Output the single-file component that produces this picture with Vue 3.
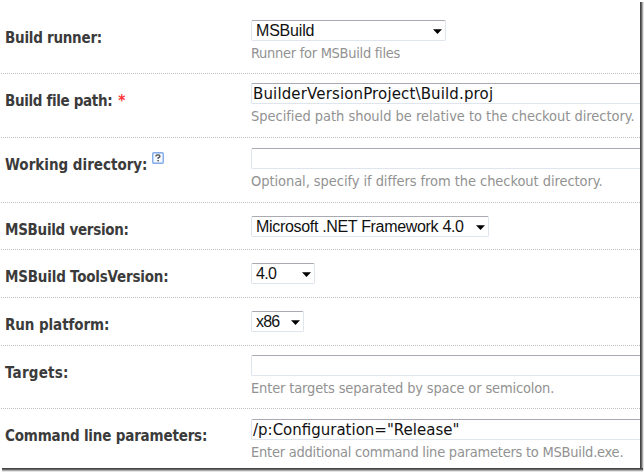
<template>
    <div class="panel">
        <div class="form">
            <div v-for="row in rows" :key="row.label" class="row" :class="row.size">
                <label class="name">
                    <span :style="{ letterSpacing: row.labelGap + 'px' }">{{ row.label }}</span>
                    <span v-if="row.required" class="required">*</span>
                    <svg v-if="row.help" class="help" width="12" height="12" viewBox="0 0 12 12">
                        <rect x="0.75" y="0.75" width="10.5" height="10.5" rx="1" fill="#f4f8ff" stroke="#83abea" stroke-width="1.4" />
                        <path d="M4 4.4V3.6Q4.3 2.8 6 2.8Q8 2.8 8 4.2Q8 5.1 6.1 5.9V7" fill="none" stroke="#444" stroke-width="1.2" />
                        <rect x="5.4" y="8" width="1.4" height="1.4" fill="#444" />
                    </svg>
                </label>
                <div class="field">
                    <div v-if="row.type === 'select'" class="select" :style="{ width: row.width + 'px' }">
                        <span :style="{ letterSpacing: row.valueGap + 'px' }">{{ row.value }}</span>
                        <svg class="arrow" width="9" height="5" viewBox="0 0 9 5">
                            <path d="M0 0.2H9L4.5 5Z" fill="#000" />
                        </svg>
                    </div>
                    <div v-else class="input">
                        <span :style="{ letterSpacing: row.valueGap + 'px' }">{{ row.value }}</span>
                    </div>
                    <p v-if="row.hint" class="hint">
                        <span :style="{ letterSpacing: row.hintGap + 'px' }">{{ row.hint }}</span>
                    </p>
                </div>
            </div>
        </div>
    </div>
</template>

<script setup>
const rows = [
    { label: 'Build runner:', labelGap: -0.25, type: 'select', value: 'MSBuild', valueGap: -0.2, width: 195, hint: 'Runner for MSBuild files', hintGap: -0.29, size: 'first' },
    { label: 'Build file path:', labelGap: -0.34, required: true, type: 'input', value: 'BuilderVersionProject\\Build.proj', valueGap: 0.14, hint: 'Specified path should be relative to the checkout directory.', hintGap: -0.03, size: 'normal' },
    { label: 'Working directory:', labelGap: 0, help: true, type: 'input', value: '', hint: 'Optional, specify if differs from the checkout directory.', hintGap: -0.06, size: 'tall' },
    { label: 'MSBuild version:', labelGap: -0.28, type: 'select', value: 'Microsoft .NET Framework 4.0', valueGap: -0.32, width: 238, size: 'short' },
    { label: 'MSBuild ToolsVersion:', labelGap: -0.19, type: 'select', value: '4.0', valueGap: -0.7, width: 64, size: 'compact' },
    { label: 'Run platform:', labelGap: -0.08, type: 'select', value: 'x86', valueGap: -0.8, width: 53, size: 'compact' },
    { label: 'Targets:', labelGap: 0.25, type: 'input', value: '', hint: 'Enter targets separated by space or semicolon.', hintGap: -0.15, size: 'low' },
    { label: 'Command line parameters:', labelGap: -0.18, type: 'input', value: '/p:Configuration="Release"', valueGap: 0, hint: 'Enter additional command line parameters to MSBuild.exe.', hintGap: -0.24, size: 'last' },
]
</script>

<style>
body {
    background: #fff;
    overflow: hidden;
}
</style>

<style scoped>
.panel {
    box-sizing: border-box;
    width: 644px;
    height: 472px;
    padding: 0 4px 4px 0;
    position: relative;
}

/* drop shadow on the right and bottom edges */
.panel::before,
.panel::after {
    content: "";
    position: absolute;
}

.panel::before {
    top: 2px;
    right: 0;
    width: 4px;
    bottom: 1px;
    background: linear-gradient(to right, #444 0 1px, #666 1px 2px, #aaa 2px 3px, #e4e4e4 3px 4px);
}

.panel::after {
    left: 2px;
    right: 1px;
    bottom: 0;
    height: 4px;
    background: linear-gradient(to bottom, #444 0 1px, #666 1px 2px, #aaa 2px 3px, #e4e4e4 3px 4px);
}

.form {
    height: 468px;
    overflow: hidden;
}

.row {
    box-sizing: border-box;
    display: flex;
    border-bottom: 1px dotted #c0c0c0;
    margin-left: 1px;
}

.first {
    height: 74px;
    padding-top: 11px;
}

.normal {
    height: 64px;
}

.tall {
    height: 65px;
}

.short {
    height: 47px;
}

.compact {
    height: 48px;
}

.low {
    height: 63px;
}

.last {
    height: 59px;
    border-bottom: 0;
}

.name {
    box-sizing: border-box;
    display: flex;
    align-items: flex-start;
    width: 250px;
    padding: 18px 0 0 4px;
    font: bold 15px/19px "DejaVu Sans Condensed", "DejaVu Sans", sans-serif;
    font-stretch: condensed;
    color: #3b3b3b;
    white-space: nowrap;
}

.required {
    margin-left: 6px;
    color: #f33;
}

.help {
    margin: -4px 0 0 4px;
}

.field {
    flex: 1;
    min-width: 0;
    padding-top: 9px;
}

.tall .field,
.last .field {
    padding-top: 10px;
}

.short .field,
.compact .field {
    padding-top: 13px;
}

.select,
.input {
    box-sizing: border-box;
    display: flex;
    align-items: center;
    height: 21px;
    border: 1px solid #dfe5ee;
    border-top: 1px solid #a9aab2;
    border-radius: 2px;
    background: #fff;
    color: #111;
    white-space: pre;
}

.select {
    justify-content: space-between;
    padding: 0 3px 0 4px;
    font: 16px/19px "Liberation Sans", Arial, sans-serif;
}

.arrow {
    margin-top: 2px;
}

.input {
    padding: 2px 0 0 1px;
    border-right: 0;
    border-radius: 2px 0 0 2px;
    font: 15px/19px "DejaVu Sans", Verdana, sans-serif;
}

.hint {
    margin: 3px 0 0;
    font: 14.5px/19px "DejaVu Sans Condensed", "DejaVu Sans", sans-serif;
    font-stretch: condensed;
    color: #929292;
    white-space: nowrap;
}
</style>
